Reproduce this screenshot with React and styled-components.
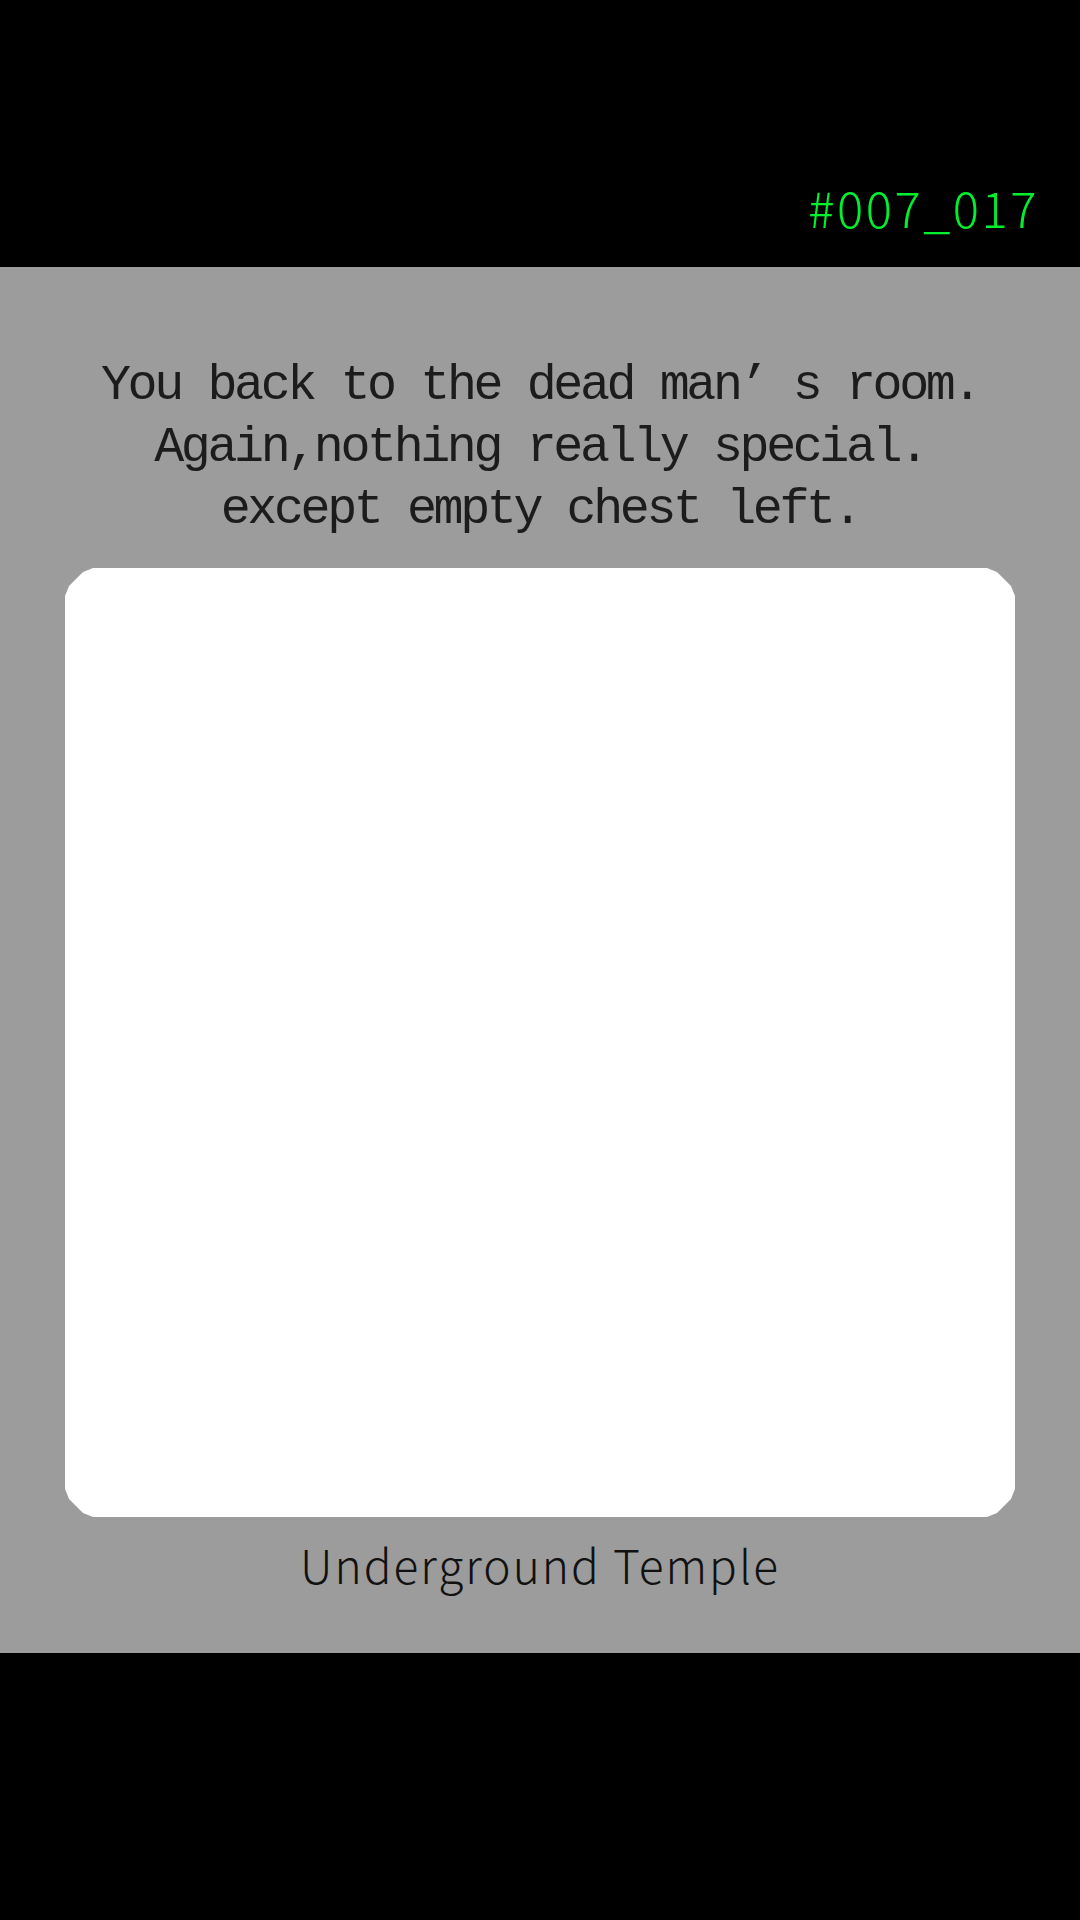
import styled, {createGlobalStyle} from "styled-components";

const GlobalStyle = createGlobalStyle`
  html, body {
    margin: 0;
    padding: 0;
    background: #000;
  }
  #root {
    min-height: 1920px;
  }
`

export default function App() {
  return (
    <Page>
      <GlobalStyle/>
      <Header>
        <SceneId>#007_017</SceneId>
      </Header>
      <Panel>
        <Narration>
          <Line>You back to the dead man’ s room.</Line>
          <Line>Again,nothing really special.</Line>
          <Line>except empty chest left.</Line>
        </Narration>
        <Picture/>
        <Caption>Underground Temple</Caption>
      </Panel>
      <Footer/>
    </Page>
  )
}

const Page = styled.div`
  display: flex;
  flex-direction: column;
  width: 1080px;
  min-height: 1920px;
  background: #000;
`

const Header = styled.header`
  height: 267px;
  box-sizing: border-box;
  display: flex;
  align-items: flex-end;
  justify-content: flex-end;
  padding: 0 41px 36px 0;
  background: #000;
`

const SceneId = styled.div`
  font-family: "Noto Sans CJK SC", "Noto Sans", sans-serif;
  font-weight: 300;
  font-size: 49px;
  letter-spacing: 2.5px;
  line-height: 1;
  color: #00f030;
`

const Panel = styled.main`
  display: flex;
  flex-direction: column;
  align-items: center;
  background: #9c9c9c;
  padding: 88px 0 61px;
`

const Narration = styled.div`
  display: flex;
  flex-direction: column;
  align-items: center;
  margin-bottom: 27px;
`

const Line = styled.p`
  margin: 0;
  font-family: "Liberation Mono", "Noto Sans CJK SC", monospace;
  font-size: 50px;
  letter-spacing: -3.4px;
  line-height: 62px;
  color: #1c1c1c;
  white-space: pre;
`

const Picture = styled.div`
  width: 950px;
  height: 949px;
  background: #fff;
  border-radius: 16px;
  clip-path: polygon(
    0 28px, 4px 18px, 18px 4px, 28px 0,
    calc(100% - 28px) 0, calc(100% - 18px) 4px, calc(100% - 4px) 18px, 100% 28px,
    100% calc(100% - 28px), calc(100% - 4px) calc(100% - 18px), calc(100% - 18px) calc(100% - 4px), calc(100% - 28px) 100%,
    28px 100%, 18px calc(100% - 4px), 4px calc(100% - 18px), 0 calc(100% - 28px)
  );
`

const Caption = styled.div`
  margin-top: 19px;
  font-family: "Noto Sans CJK SC", "Noto Sans", sans-serif;
  font-weight: 300;
  font-size: 46px;
  letter-spacing: 2px;
  line-height: 56px;
  color: #111;
`

const Footer = styled.footer`
  flex: 1;
  background: #000;
`
